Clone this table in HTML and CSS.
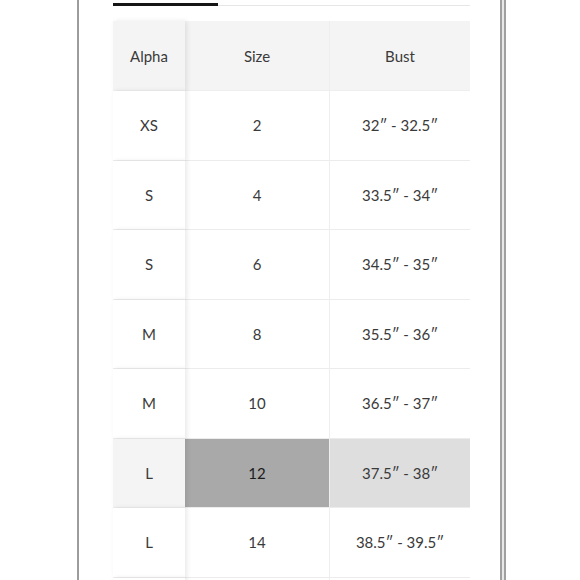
FILE: index.html
```html
<!DOCTYPE html>
<html>
<head>
<meta charset="utf-8">
<link rel="stylesheet" href="styles.css">
</head>
<body>
<div class="page">
  <div class="gutter"></div>
  <div class="panel">
    <div class="tabs">
      <div class="tab active"></div>
      <div class="tab rest"></div>
    </div>
    <div class="chart">
      <div class="cell head alpha">Alpha</div>
      <div class="cell head size">Size</div>
      <div class="cell head bust">Bust</div>

      <div class="cell alpha">XS</div>
      <div class="cell size">2</div>
      <div class="cell bust">32″ - 32.5″</div>

      <div class="cell alpha">S</div>
      <div class="cell size">4</div>
      <div class="cell bust">33.5″ - 34″</div>

      <div class="cell alpha">S</div>
      <div class="cell size">6</div>
      <div class="cell bust">34.5″ - 35″</div>

      <div class="cell alpha">M</div>
      <div class="cell size">8</div>
      <div class="cell bust">35.5″ - 36″</div>

      <div class="cell alpha">M</div>
      <div class="cell size">10</div>
      <div class="cell bust">36.5″ - 37″</div>

      <div class="cell alpha hl-alpha">L</div>
      <div class="cell size hl-size">12</div>
      <div class="cell bust hl-bust">37.5″ - 38″</div>

      <div class="cell alpha">L</div>
      <div class="cell size">14</div>
      <div class="cell bust">38.5″ - 39.5″</div>

      <div class="cell alpha"></div>
      <div class="cell size"></div>
      <div class="cell bust"></div>
    </div>
  </div>
  <div class="edge"></div>
</div>
</body>
</html>
```
FILE: styles.css
```css
html, body {
  margin: 0;
  padding: 0;
  background: #ffffff;
  height: 580px;
  overflow: hidden;
}

.page {
  display: flex;
  height: 580px;
  font-family: Lato, "Open Sans", sans-serif;
  color: #3a3a3a;
}

.gutter {
  width: 77px;
  flex: none;
}

.panel {
  flex: none;
  border-left: 2px solid #9c9c9c;
  padding-left: 34px;
  box-sizing: border-box;
  width: 423px;
}

.edge {
  width: 2px;
  flex: none;
  border-left: 2px solid #a0a0a0;
  border-right: 2px solid #a0a0a0;
  background: #e8e8e8;
}

.tabs {
  display: flex;
  align-items: flex-end;
  width: 357px;
  height: 6px;
}

.tab.active {
  width: 105px;
  height: 3px;
  background: #151515;
}

.tab.rest {
  flex: 1;
  height: 1px;
  background: #e6e6e6;
}

.chart {
  margin-top: 15px;
  width: 357px;
  display: grid;
  grid-template-columns: 72px 145px 140px;
  grid-template-rows: 70px;
  grid-auto-rows: 69.5px;
}

.cell {
  display: flex;
  align-items: center;
  justify-content: center;
  font-size: 15px;
  border-bottom: 1px solid #ececec;
  box-sizing: border-box;
  background: #ffffff;
}

.cell.head {
  background: #f4f4f4;
  border-bottom: 1px solid #eeeeee;
}

.cell.alpha {
  position: relative;
  z-index: 1;
  box-shadow: 2px 0 5px rgba(0, 0, 0, 0.09);
}

.cell.size {
  border-right: 1px solid #eeeeee;
}

.cell.hl-alpha {
  background: #f4f4f4;
}

.cell.hl-size {
  background: #a9a9a9;
  color: #1c1c1c;
}

.cell.hl-bust {
  background: #dedede;
}
```
